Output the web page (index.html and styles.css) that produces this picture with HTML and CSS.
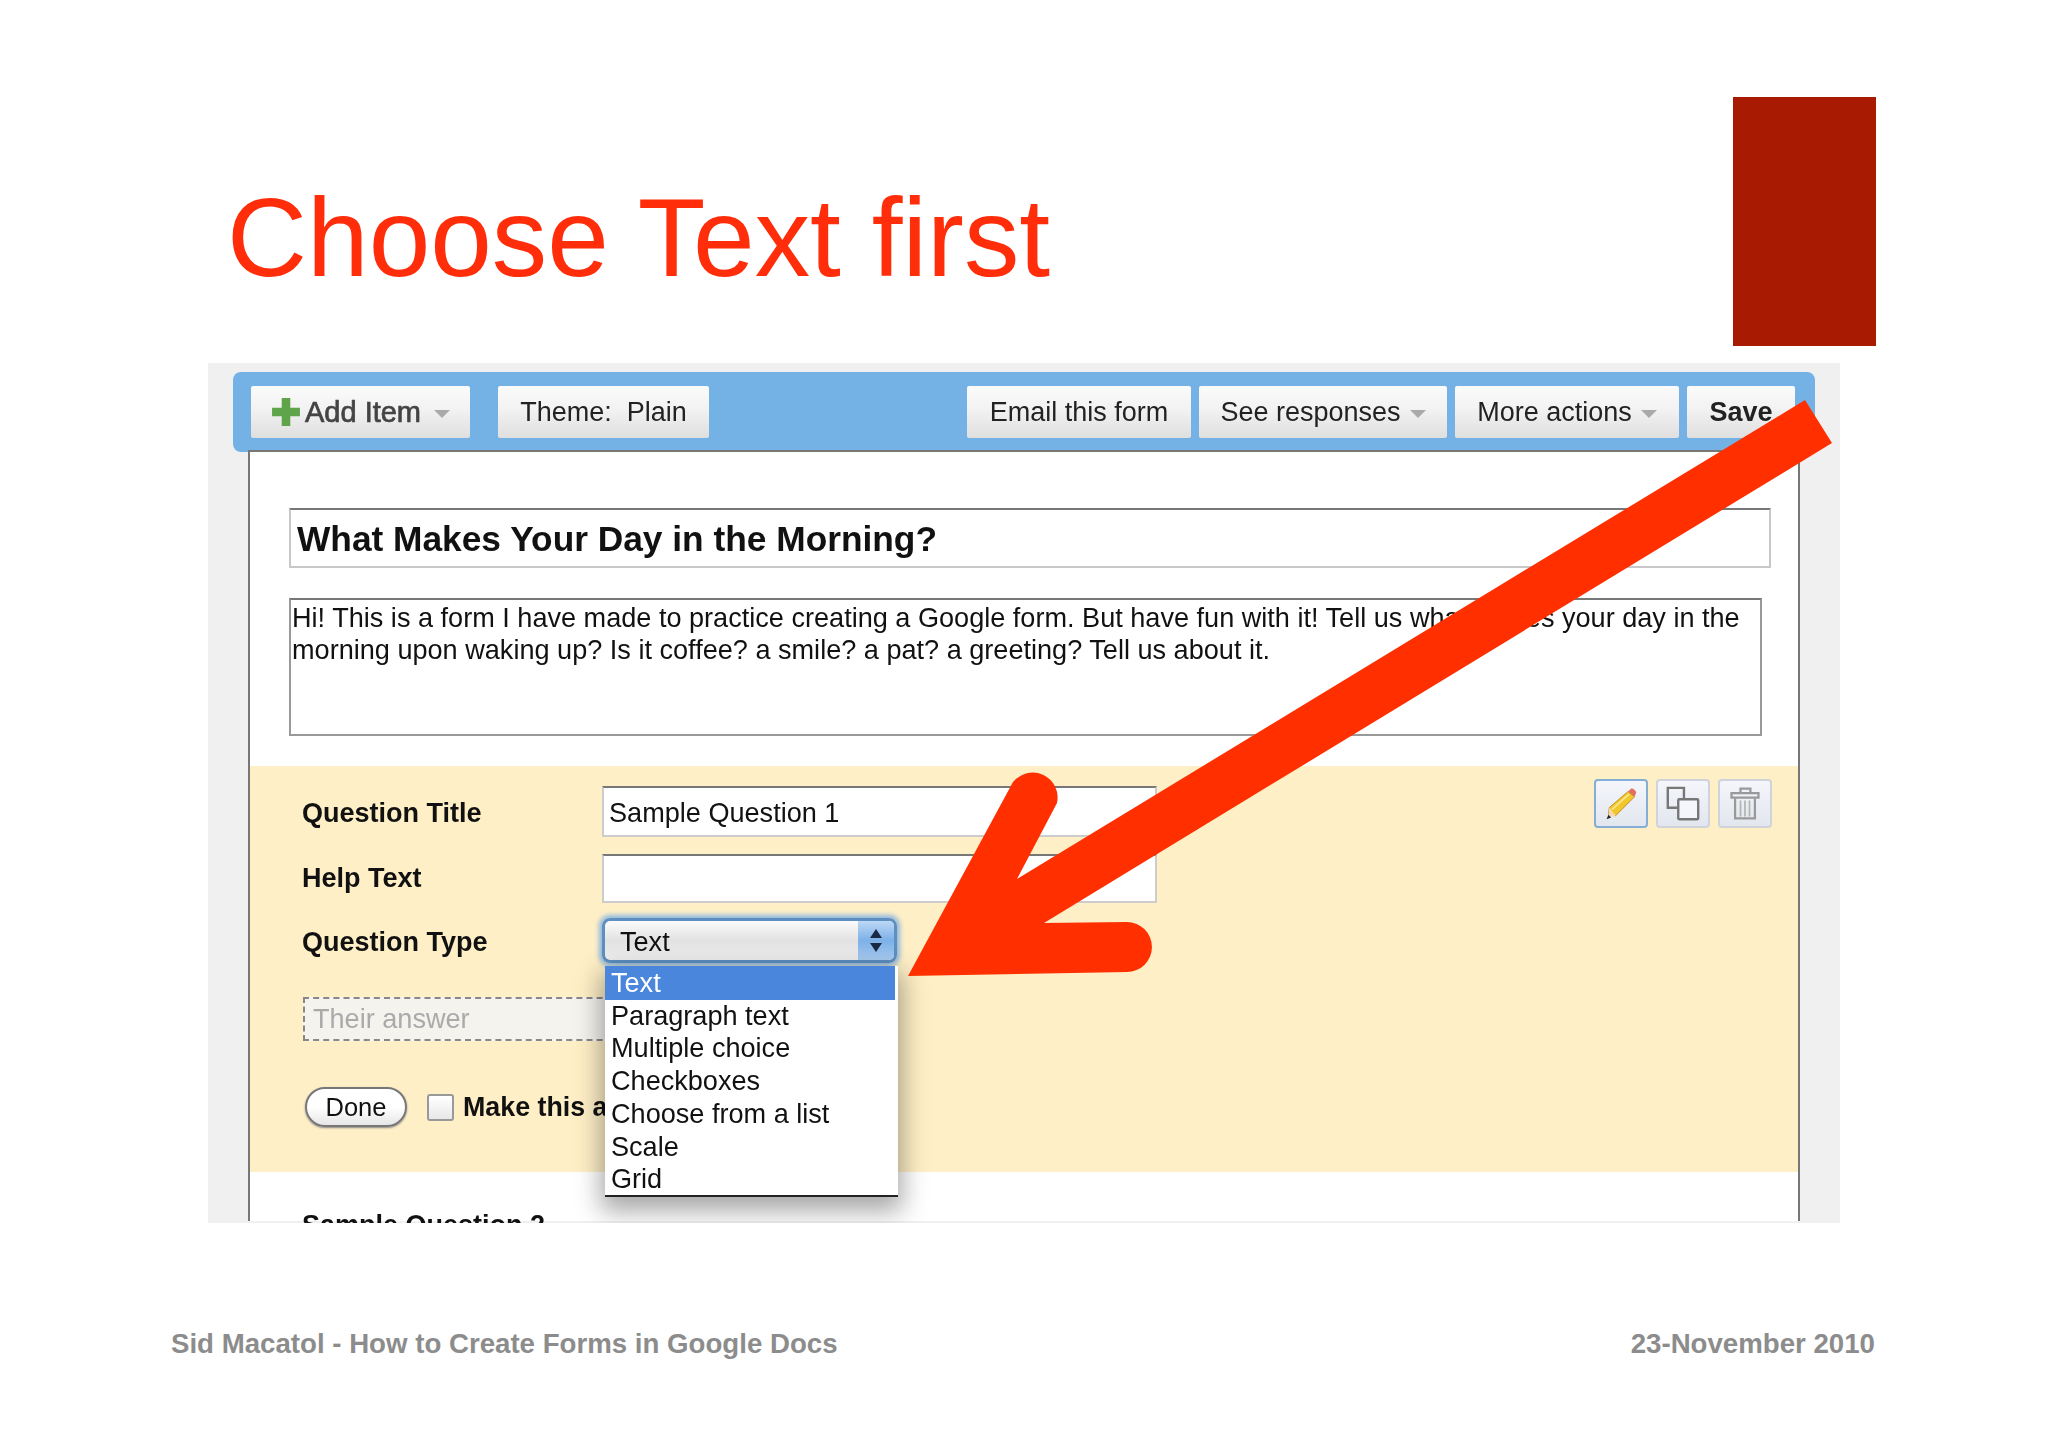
FILE: index.html
```html
<!DOCTYPE html>
<html lang="en">
<head>
<meta charset="utf-8">
<title>Choose Text first</title>
<link rel="stylesheet" href="styles.css">
</head>
<body>
<div class="slide">
  <header class="slide-head">
    <h1 class="slide-title">Choose Text first</h1>
    <div class="red-block"></div>
  </header>

  <section class="shot">
    <div class="toolbar">
      <div class="tool-group left">
        <div class="btn add-item">
          <svg class="plus" viewBox="0 0 28 28"><path d="M10 1h8v9h9v8h-9v9h-8v-9H1v-8h9z" fill="#5fa44a"/></svg>
          <span>Add Item</span><i class="caret"></i>
        </div>
        <div class="btn theme">Theme:&nbsp; Plain</div>
      </div>
      <div class="tool-group right">
        <div class="btn email">Email this form</div>
        <div class="btn see">See responses<i class="caret"></i></div>
        <div class="btn more">More actions<i class="caret"></i></div>
        <div class="btn save">Save</div>
      </div>
    </div>

    <div class="panel">
      <div class="form-head">
        <div class="title-input">What Makes Your Day in the Morning?</div>
        <div class="desc-input">
          <div class="nowrap">Hi! This is a form I have made to practice creating a Google form. But have fun with it! Tell us what makes your day in the</div>
          <div class="nowrap">morning upon waking up? Is it coffee? a smile? a pat? a greeting? Tell us about it.</div>
        </div>
      </div>

      <div class="question">
        <div class="q-row row-title">
          <label class="q-label">Question Title</label>
          <div class="q-input">Sample Question 1</div>
          <div class="q-tools">
            <div class="icon-btn active">
              <svg viewBox="0 0 40 40" width="36" height="36">
                <path d="M28 6l7 6L14 33l-8-1 1-8z" fill="#f2c72e" stroke="#b98a12" stroke-width="1"/>
                <path d="M28 6l3-3c2-1 5 2 6 4l-2 5z" fill="#e0705f"/>
                <path d="M7 24l7 9-8 2z" fill="#f3d9b5"/>
                <path d="M4 37l2-5 3 3z" fill="#222"/>
                <path d="M10 26L29 9" stroke="#fbe58a" stroke-width="2"/>
              </svg>
            </div>
            <div class="icon-btn">
              <svg viewBox="0 0 40 40" width="38" height="38">
                <path d="M21 15V3H4v21h11" fill="none" stroke="#777" stroke-width="2.5"/>
                <rect x="15" y="15" width="21" height="21" rx="1" fill="#f4f6fb" stroke="#777" stroke-width="2.5"/>
              </svg>
            </div>
            <div class="icon-btn">
              <svg viewBox="0 0 40 40" width="36" height="36">
                <path d="M15 7V3h11v4M5 8h30v5H5z" fill="none" stroke="#999" stroke-width="2.5"/>
                <path d="M9 14v22h22V14" fill="none" stroke="#999" stroke-width="2.5"/>
                <path d="M15 16v18M20 16v18M25 16v18" stroke="#b5b5b5" stroke-width="2"/>
              </svg>
            </div>
          </div>
        </div>
        <div class="q-row row-help">
          <label class="q-label">Help Text</label>
          <div class="q-input"></div>
        </div>
        <div class="q-row row-type">
          <label class="q-label">Question Type</label>
          <div class="select">
            <span class="select-value">Text</span>
            <span class="stepper"><i class="up"></i><i class="down"></i></span>
          </div>
        </div>
        <div class="answer">Their answer</div>
        <div class="done-row">
          <div class="done">Done</div>
          <span class="check"></span>
          <span class="q-label required">Make this a required question</span>
        </div>
        <ul class="menu">
          <li class="selected">Text</li>
          <li>Paragraph text</li>
          <li>Multiple choice</li>
          <li>Checkboxes</li>
          <li>Choose from a list</li>
          <li>Scale</li>
          <li>Grid</li>
        </ul>
      </div>
      <div class="next-q q-label">Sample Question 2</div>
    </div>
  </section>

  <footer class="slide-foot">
    <span>Sid Macatol - How to Create Forms in Google Docs</span>
    <span>23-November 2010</span>
  </footer>

  <svg class="arrow" viewBox="0 0 2048 1447" width="2048" height="1447">
    <path d="M1805 400L1832 443L1044 923L1127 922A25 25 0 0 1 1127 972L908 976L1013 782A25 25 0 0 1 1057 803L1017 879Z" fill="#ff2f00"/>
  </svg>
</div>
</body>
</html>
```
FILE: styles.css
```css
* { box-sizing: border-box; }
html, body { margin: 0; background: #fff; }
body { font-family: "Liberation Sans", Arial, sans-serif; color: #111; }

.slide { position: relative; width: 2048px; height: 1447px; overflow: hidden; }

.slide-head { display: flex; align-items: flex-start; height: 346px; padding: 97px 172px 0 227px; }
.slide-title { margin: 81px 0 0; font-size: 110.8px; line-height: 120px; font-weight: 400; color: #ff2d0a; white-space: nowrap; }
.red-block { width: 143px; height: 249px; margin-left: auto; background: #a81b02; }

.shot { width: 1632px; height: 860px; margin: 17px 0 0 208px; padding: 9px 25px 0; background: #f0f0f1; overflow: hidden; filter: blur(0.6px); }

.toolbar { display: flex; justify-content: space-between; height: 80px; padding: 14px 20px 0 18px; background: #74b2e6; border-radius: 8px; }
.tool-group { display: flex; }
.tool-group.left { gap: 28px; }
.tool-group.right { gap: 8px; }
.btn { display: flex; align-items: center; justify-content: center; height: 52px; font-size: 27px; white-space: nowrap; color: #222; background: linear-gradient(#fbfbfb, #f2f2f2 45%, #dfdfdf); border-radius: 2px; }
.add-item { width: 219px; gap: 4px; color: #444; font-size: 29px; -webkit-text-stroke: 0.7px #444; }
.plus { width: 30px; height: 30px; flex: none; }
.theme { width: 211px; }
.email { width: 224px; }
.see { width: 248px; }
.more { width: 224px; }
.save { width: 108px; font-weight: 700; }
.caret { width: 0; height: 0; margin: 3px 0 0 9px; border-left: 8px solid transparent; border-right: 8px solid transparent; border-top: 8px solid #aaa; }

.panel { position: relative; width: 1552px; height: 771px; margin: -2px 0 0 15px; background: #fff; border: 2px solid #777; border-bottom: 0; }
.form-head { display: flex; flex-direction: column; gap: 30px; padding: 56px 0 30px 39px; }
.title-input { display: flex; align-items: center; width: 1482px; height: 60px; padding: 1px 6px 0; font-size: 35.3px; font-weight: 700; color: #111; border: 2px solid #c8c8c8; border-top-color: #777; }
.desc-input { width: 1473px; height: 138px; padding: 2px 1px; font-size: 27.1px; line-height: 32px; border: 2px solid #999; border-top-color: #777; }
.nowrap { white-space: nowrap; }

.question { position: relative; height: 406px; padding: 20px 26px 0 52px; background: #feefc6; }
.q-row { display: flex; align-items: center; }
.row-title { height: 51px; }
.row-help { height: 49px; margin-top: 17px; }
.row-type { height: 45px; margin-top: 15px; }
.q-label { font-size: 27px; font-weight: 700; color: #111; white-space: nowrap; }
.q-row > .q-label { width: 300px; flex: none; }
.row-title > .q-label, .row-type > .q-label { padding-top: 3px; }
.q-input { display: flex; align-items: center; width: 555px; height: 100%; padding: 0 5px; font-size: 27.1px; background: #fff; border: 2px solid #ccc; border-top-color: #777; }
.row-title > .q-input { padding-top: 3px; }

.q-tools { display: flex; gap: 8px; margin: -7px 0 0 auto; align-self: flex-start; }
.icon-btn { display: flex; align-items: center; justify-content: center; width: 54px; height: 49px; background: linear-gradient(#f4f6fb, #e2e6ee); border: 2px solid #d0d4da; border-radius: 4px; }
.icon-btn.active { border-color: #85aed6; }

.select { display: flex; align-items: stretch; width: 295px; height: 45px; overflow: hidden; background: linear-gradient(#fbfbfb, #e2e2e2 50%, #f0f0f0); border: 3px solid #5d8fc0; border-radius: 8px; box-shadow: 0 0 5px 3px #8db7e0; font-size: 27.1px; }
.select-value { flex: 1; padding-left: 15px; line-height: 41px; }
.stepper { display: flex; flex-direction: column; align-items: center; justify-content: center; gap: 5px; width: 36px; background: linear-gradient(#bcd8f5, #7db1e8 50%, #a9cdf2); }
.up, .down { width: 0; height: 0; border-left: 6px solid transparent; border-right: 6px solid transparent; }
.up { border-bottom: 9px solid #1a2a44; }
.down { border-top: 9px solid #1a2a44; }

.answer { width: 330px; height: 44px; margin: 34px 0 0 1px; padding-left: 8px; font-size: 27.1px; line-height: 40px; color: #aaa; background: #f5f3ee; border: 2px dashed #888; }

.done-row { display: flex; align-items: center; height: 40px; margin: 46px 0 0 3px; }
.done { width: 102px; height: 40px; font-size: 25.5px; line-height: 37px; text-align: center; background: linear-gradient(#fff, #fff 50%, #e6e6e6); border: 2px solid #777; border-radius: 20px; box-shadow: 0 1px 2px #888; }
.check { width: 27px; height: 27px; margin: 0 9px 0 20px; background: linear-gradient(#fff, #e8e8e8); border: 2px solid #999; border-radius: 3px; }
.required { font-size: 26.8px; }

.menu { position: absolute; left: 355px; top: 200px; width: 293px; height: 231px; margin: 0; padding: 1px 0 0; list-style: none; font-size: 27.1px; line-height: 32.7px; background: #fff; border-bottom: 2px solid #222; box-shadow: 0 10px 24px 4px rgba(0,0,0,.35); }
.menu li { padding-left: 6px; }
.menu .selected { margin: -1px 3px 0 0; padding-top: 1px; color: #fff; background: #4a86dc; }

.next-q { padding: 38px 0 0 52px; }

.slide-foot { display: flex; justify-content: space-between; margin-top: 107px; padding: 0 173px 0 171px; font-size: 27.65px; line-height: 28px; font-weight: 700; color: #8c8c8c; }

.arrow { position: absolute; left: 0; top: 0; pointer-events: none; }
```
